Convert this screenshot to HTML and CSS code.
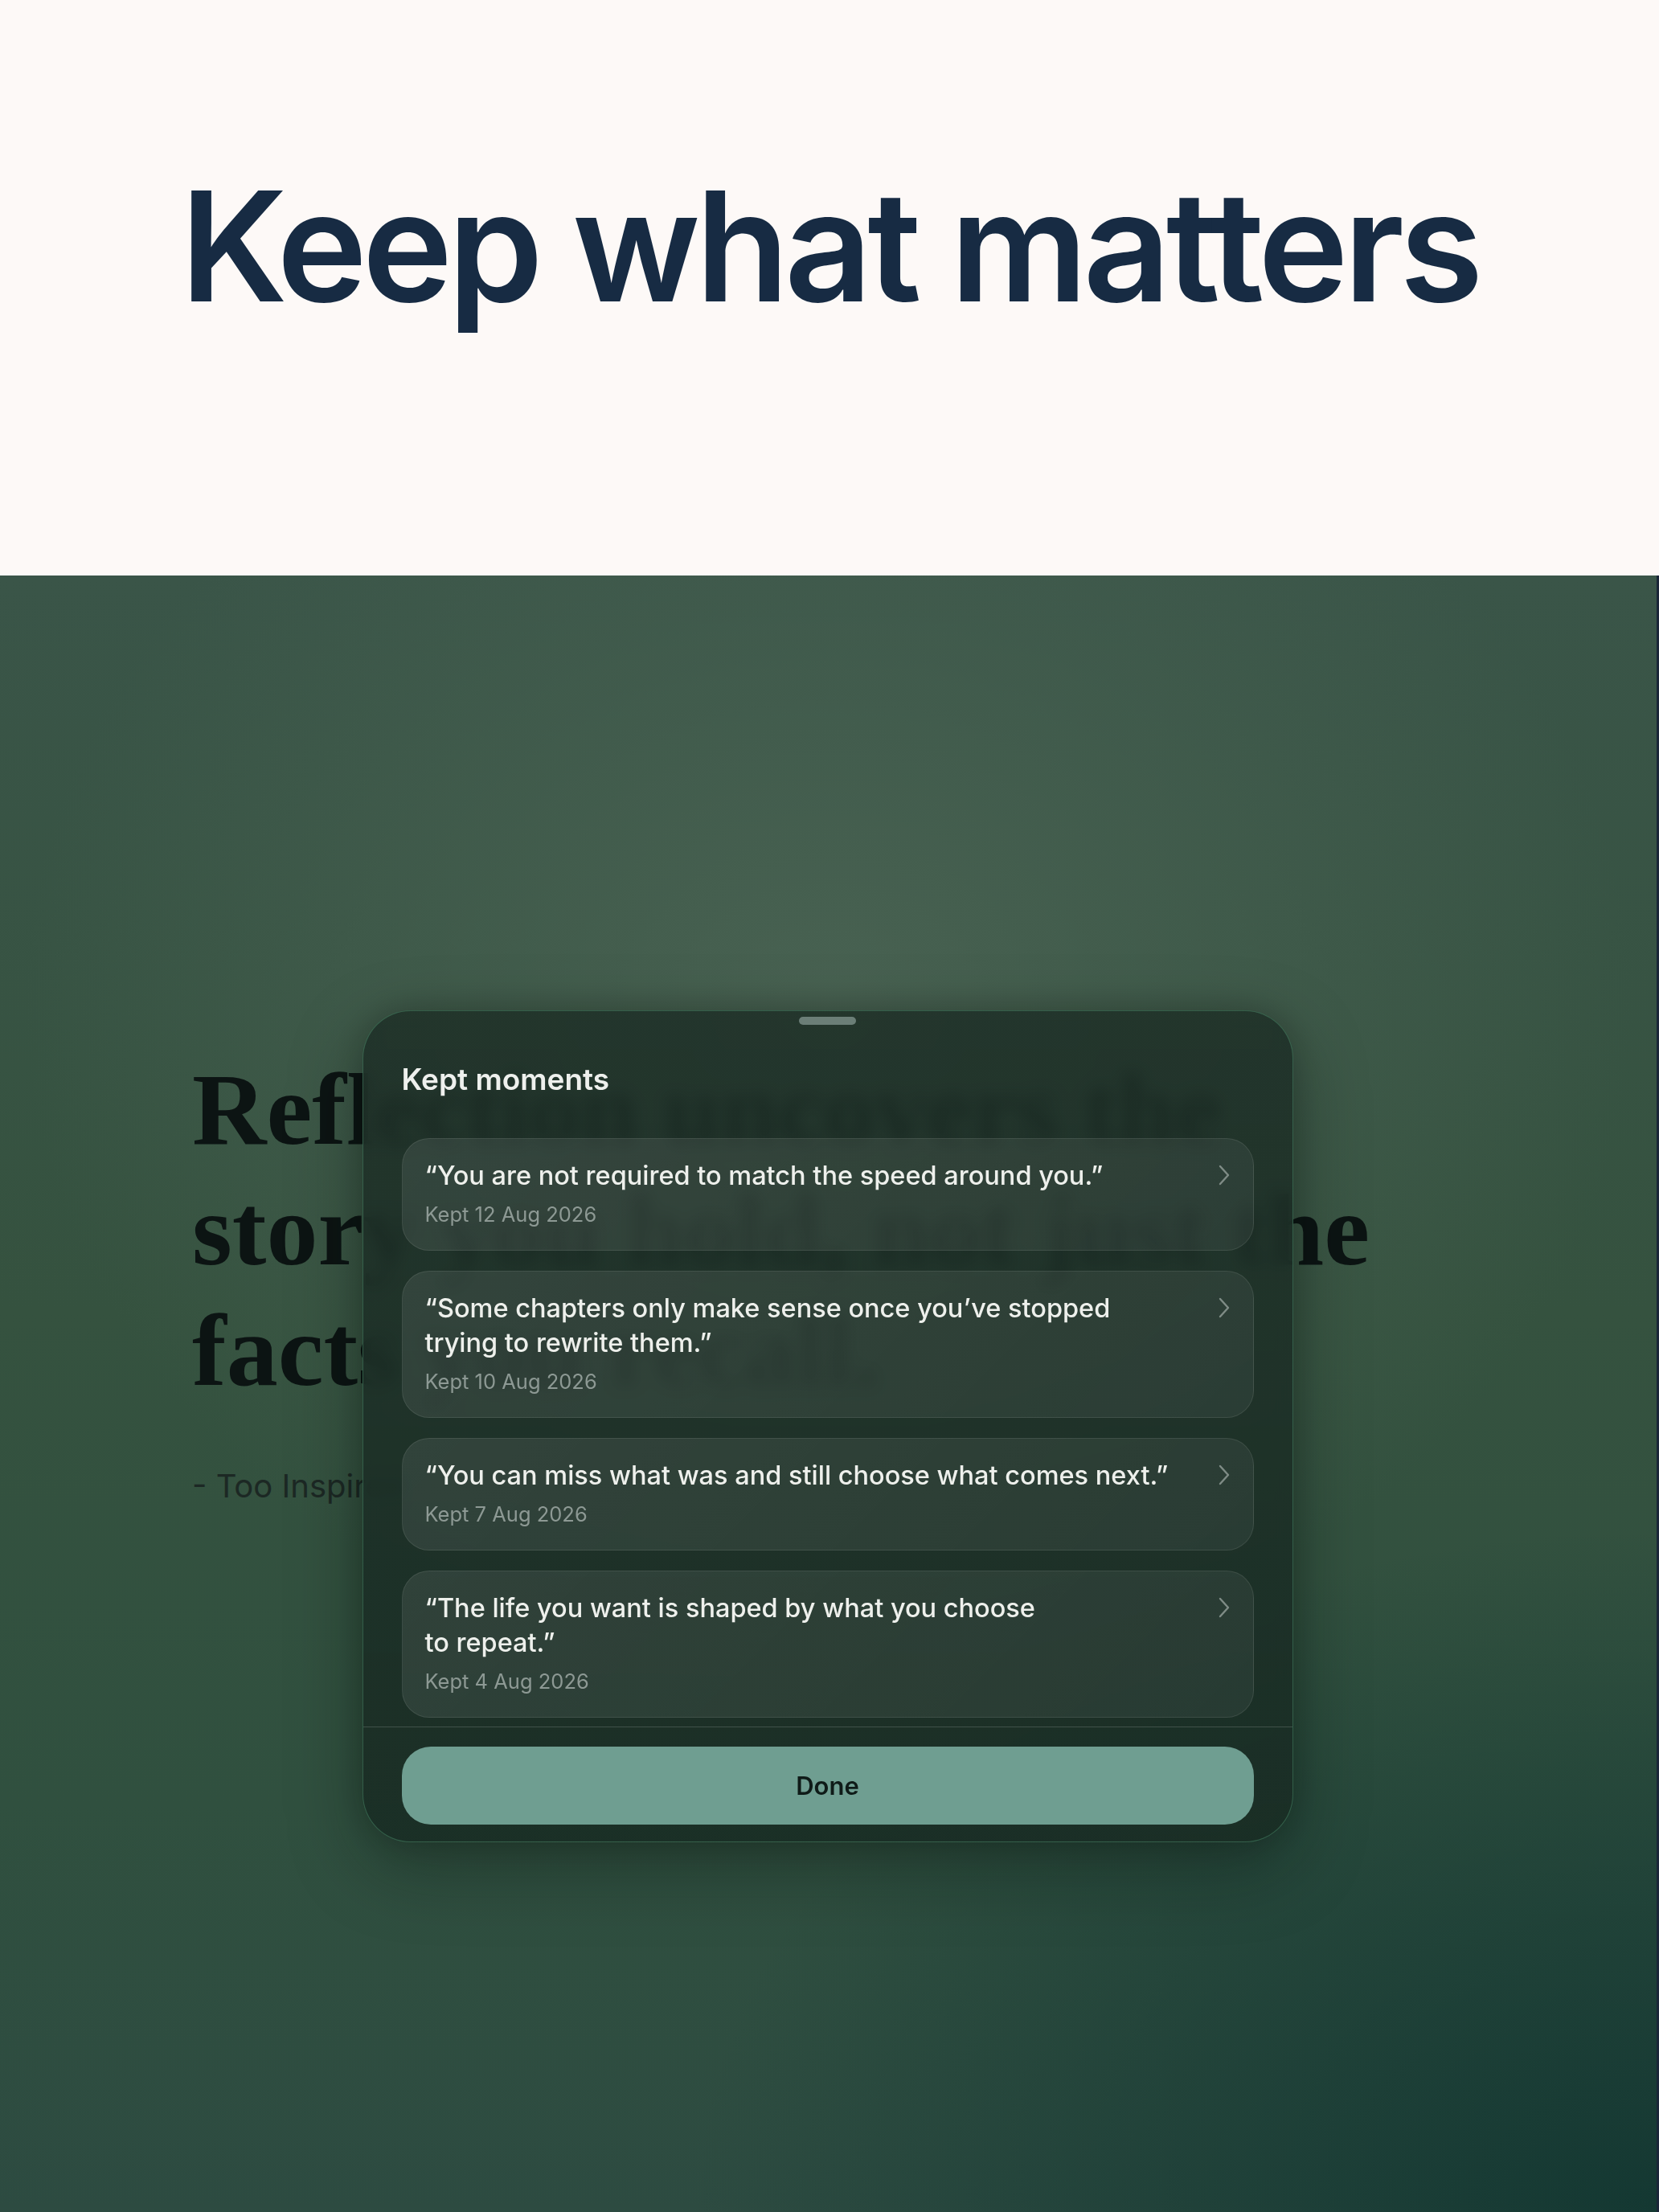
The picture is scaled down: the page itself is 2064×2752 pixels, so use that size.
FILE: index.html
```html
<!DOCTYPE html>
<html lang="en">
<head>
<meta charset="utf-8">
<title>Keep what matters</title>
<link rel="stylesheet" href="styles.css">
</head>
<body>
<header class="hero">
  <h1 class="hero-title">Keep what matters</h1>
</header>
<section class="stage">
  <div class="reflection">
    <p class="reflection-quote">Reflection uncovers the<br>story you hold, not just the<br>facts you recall.</p>
    <p class="reflection-author">- Too Inspired</p>
  </div>
  <div class="overlay">
    <div class="sheet" role="dialog" aria-label="Kept moments">
      <div class="grabber"></div>
      <div class="sheet-body">
        <h2 class="sheet-title">Kept moments</h2>
        <ul class="moments">
          <li class="moment">
            <div class="moment-text">
              <p class="moment-quote">“You are not required to match the speed around you.”</p>
              <p class="moment-date">Kept 12 Aug 2026</p>
            </div>
            <svg class="chevron" viewBox="0 0 16 26" width="16" height="26"><polyline points="3,2 13,13 3,24"/></svg>
          </li>
          <li class="moment">
            <div class="moment-text">
              <p class="moment-quote">“Some chapters only make sense once you’ve stopped trying to rewrite them.”</p>
              <p class="moment-date">Kept 10 Aug 2026</p>
            </div>
            <svg class="chevron" viewBox="0 0 16 26" width="16" height="26"><polyline points="3,2 13,13 3,24"/></svg>
          </li>
          <li class="moment">
            <div class="moment-text">
              <p class="moment-quote">“You can miss what was and still choose what comes next.”</p>
              <p class="moment-date">Kept 7 Aug 2026</p>
            </div>
            <svg class="chevron" viewBox="0 0 16 26" width="16" height="26"><polyline points="3,2 13,13 3,24"/></svg>
          </li>
          <li class="moment">
            <div class="moment-text">
              <p class="moment-quote">“The life you want is shaped by what you choose to repeat.”</p>
              <p class="moment-date">Kept 4 Aug 2026</p>
            </div>
            <svg class="chevron" viewBox="0 0 16 26" width="16" height="26"><polyline points="3,2 13,13 3,24"/></svg>
          </li>
        </ul>
      </div>
      <div class="sheet-footer">
        <button class="done-btn" type="button">Done</button>
      </div>
    </div>
  </div>
</section>
</body>
</html>
```
FILE: styles.css
```css
* { box-sizing: border-box; }

html, body {
  margin: 0;
  padding: 0;
}

body {
  font-family: Inter, "Noto Sans", "Liberation Sans", sans-serif;
  background: #1a2638;
}

.hero {
  height: 716px;
  background: #fdf9f7;
  padding-top: 211px;
}

.hero-title {
  margin: 0;
  text-align: center;
  font-size: 190px;
  line-height: 1;
  font-weight: 600;
  letter-spacing: -0.031em;
  color: #172b43;
}

.stage {
  position: relative;
  height: 2036px;
  margin-right: 3px;
  background:
    radial-gradient(ellipse 1000px 850px at 50% 26%, rgba(75, 100, 84, 0.85), rgba(75, 100, 84, 0) 100%),
    radial-gradient(ellipse 1200px 850px at 100% 100%, rgba(20, 56, 50, 1), rgba(20, 56, 50, 0) 100%),
    linear-gradient(180deg, #3a5548 0%, #35523f 45%, #30503f 75%, #2d4b41 100%);
  overflow: hidden;
}

.reflection {
  padding: 589px 0 0 239px;
}

.reflection-quote {
  margin: 0;
  white-space: nowrap;
  font-family: "Liberation Serif", "DejaVu Serif", serif;
  font-weight: 700;
  font-size: 128px;
  line-height: 150px;
  color: #0c1413;
}

.reflection-author {
  margin: 66px 0 0;
  font-size: 40px;
  line-height: 56px;
  color: #1c2824;
}

.overlay {
  position: absolute;
  inset: 0;
  display: flex;
  justify-content: center;
  align-items: flex-start;
  padding: 541px 2px 0 0;
}

.sheet {
  width: 1158px;
  border: 1px solid rgba(90, 170, 130, 0.38);
  border-radius: 60px;
  background: linear-gradient(180deg, rgba(30, 47, 39, 0.86), rgba(25, 44, 36, 0.9));
  backdrop-filter: blur(10px);
  -webkit-backdrop-filter: blur(10px);
  box-shadow: 0 30px 90px rgba(5, 15, 12, 0.35), 0 0 40px rgba(5, 15, 12, 0.2);
  overflow: hidden;
}

.grabber {
  width: 71px;
  height: 10px;
  margin: 7px auto 0;
  border-radius: 5px;
  background: #6b7e77;
}

.sheet-body {
  padding: 0 48px 11px;
}

.sheet-title {
  margin: 46px 0 0;
  font-size: 37px;
  line-height: 44px;
  font-weight: 600;
  color: #eef0ed;
}

.moments {
  list-style: none;
  margin: 51px 0 0;
  padding: 0;
  display: flex;
  flex-direction: column;
  gap: 25px;
}

.moment {
  display: flex;
  align-items: flex-start;
  gap: 58px;
  padding: 24px 28px 27px;
  border-radius: 34px;
  border: 1px solid rgba(255, 255, 255, 0.09);
  background: linear-gradient(135deg, rgba(255, 255, 255, 0.085), rgba(255, 255, 255, 0.055));
}

.moment-text {
  flex: 1;
  min-width: 0;
}

.moment-quote {
  margin: 0;
  font-size: 32.5px;
  line-height: 43px;
  font-weight: 500;
  color: #eef0ec;
  text-wrap: pretty;
}

.moment-date {
  margin: 10px 0 0;
  font-size: 25.5px;
  line-height: 34px;
  color: #8d9994;
}

.chevron {
  flex: none;
  margin-top: 8px;
  fill: none;
  stroke: #7f8c86;
  stroke-width: 2.4;
  stroke-linecap: round;
  stroke-linejoin: round;
}

.sheet-footer {
  border-top: 1px solid rgba(255, 255, 255, 0.16);
  padding: 24px 48px 21px;
}

.done-btn {
  display: block;
  width: 100%;
  height: 97px;
  border: none;
  border-radius: 36px;
  background: #6f9e91;
  font-family: Inter, "Noto Sans", sans-serif;
  font-size: 31px;
  font-weight: 600;
  color: #0f1b18;
}
```
